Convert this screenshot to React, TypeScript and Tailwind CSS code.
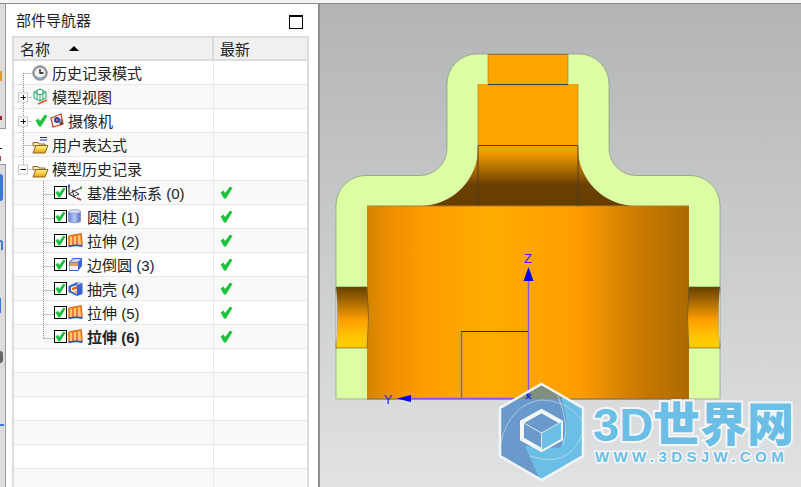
import React from 'react';

const FONT = "font-['Liberation_Sans','Noto_Sans_CJK_SC',sans-serif]";

const Check = ({ className = '' }: { className?: string }) => (
    <svg width="13" height="13" viewBox="0 0 13 13" className={className}>
        <path d="M0.5 6.5 L3.5 4.5 L5 7 L10 0.5 L12.5 2 L6 12.5 L4 12.5 Z" fill="#1fc23c" />
    </svg>
);

const CheckBox = () => (
    <span className="flex h-[13px] w-[13px] shrink-0 items-center justify-center border border-black bg-white">
        <Check className="h-[11px] w-[11px]" />
    </span>
);

const Clock = () => (
    <svg width="16" height="16" viewBox="0 0 16 16">
        <circle cx="8" cy="8" r="7.2" fill="#a4a4a4" stroke="#808080" />
        <circle cx="8" cy="8" r="5.2" fill="#f4f4f0" />
        <path d="M8 4 V8 H11.5" stroke="#111" strokeWidth="1.3" fill="none" />
        <path d="M3.5 11.5 Q8 15 12.5 11.5" stroke="#7fa6cf" strokeWidth="1.6" fill="none" />
    </svg>
);

const ViewCube = () => (
    <svg width="17" height="17" viewBox="0 0 17 17" fill="none">
        <path d="M8 1 L14 4 V10 L8 13 L2 10 V4 Z M2 4 L8 7 L14 4 M8 7 V13 M5 2.5 V11.5 M11 2.5 V11.5" stroke="#1fa868" strokeWidth="1" />
        <path d="M6 16 L15 12" stroke="#e8502a" strokeWidth="1.5" />
    </svg>
);

const Camera = () => (
    <svg width="15" height="15" viewBox="0 0 15 15" fill="none">
        <path d="M1 5 L11 1 L13 11 L3 14 Z" fill="#fff" stroke="#d8341f" strokeWidth="1.2" />
        <circle cx="7" cy="7" r="3" fill="#2b3fa8" />
        <circle cx="7" cy="7" r="1.2" fill="#e86a6a" />
        <path d="M11 6 V12 M9 10 H13" stroke="#222" strokeWidth="1" />
    </svg>
);

const Folder = ({ lines = false }: { lines?: boolean }) => (
    <svg width="17" height="18" viewBox="0 0 17 18" fill="none">
        <defs>
            <linearGradient id="folder" x1="0" x2="0" y1="0" y2="1">
                <stop offset="0" stopColor="#fff09a" />
                <stop offset="1" stopColor="#f0a400" />
            </linearGradient>
        </defs>
        {lines && <path d="M8 1.5 H15 M8 4 H15" stroke="#2a2aa0" strokeWidth="1" />}
        <path d="M1 6.5 H6 L7 8 H13 V10 H1 Z" fill="#fbe7a8" stroke="#7a5c18" strokeWidth="0.9" />
        <path d="M1 17 L4 9.5 H16 L13 17 Z" fill="url(#folder)" stroke="#7a5c18" strokeWidth="0.9" />
    </svg>
);

const Datum = () => (
    <svg width="15" height="17" viewBox="0 0 15 17" fill="none">
        <path d="M1 2 V10 L8 14" stroke="#222" strokeWidth="1.1" />
        <path d="M1 10 L8 6 L14 4 M4 6 L11 10 L6 12 Z" stroke="#444" strokeWidth="1" />
        <path d="M1 0.5 V3" stroke="#2030c0" strokeWidth="1.6" />
        <path d="M9 14 L13 16" stroke="#d02030" strokeWidth="1.6" />
        <path d="M12 4 L14 3" stroke="#20a040" strokeWidth="1.6" />
    </svg>
);

const Cylinder = () => (
    <svg width="13" height="15" viewBox="0 0 13 15">
        <defs>
            <linearGradient id="cyl" x1="0" x2="1" y1="0" y2="0">
                <stop offset="0" stopColor="#5f7fe0" />
                <stop offset="0.5" stopColor="#b8c8f5" />
                <stop offset="1" stopColor="#5470d0" />
            </linearGradient>
        </defs>
        <path d="M0.5 2.5 V12.5 Q6.5 15.5 12.5 12.5 V2.5 Z" fill="url(#cyl)" stroke="#6a7fb0" strokeWidth="0.6" />
        <ellipse cx="6.5" cy="2.5" rx="6" ry="2" fill="#d4dcf4" stroke="#7f90b8" strokeWidth="0.6" />
    </svg>
);

const Extrude = () => (
    <svg width="15" height="15" viewBox="0 0 15 15" fill="none">
        <path d="M1 3 L13 1 L14 12 L1 13 Z" fill="#f9c878" />
        <path d="M1 3 L13 1 L14 12 M1 3 V13 M5 2.5 V13 M9 2 V13" stroke="#e8701c" strokeWidth="1.6" />
        <path d="M0.5 13.5 Q7 11.5 14.5 13" stroke="#2c4fc0" strokeWidth="1.8" />
    </svg>
);

const Blend = () => (
    <svg width="15" height="15" viewBox="0 0 15 15">
        <path d="M1 5 L5 1 H14 V9 L10 14 H1 Z" fill="#3a68d8" />
        <path d="M2 5 L5.5 2 H13 L10 5 Z" fill="#c8d4f0" />
        <rect x="1.5" y="5.5" width="8.5" height="3.5" fill="#f0a040" />
        <rect x="1.5" y="9" width="8.5" height="4" fill="#f4f4f4" />
    </svg>
);

const Shell = () => (
    <svg width="15" height="15" viewBox="0 0 15 15">
        <path d="M0.5 5 L9 1 L14.5 2 V13 L9 15 L0.5 11 Z" fill="#3f63c8" />
        <path d="M9 1 L14.5 2 L9.5 4 Z" fill="#c4cce0" />
        <path d="M9 4 V13 L3 10 V6 Z" fill="#f4f0e8" />
        <path d="M4 7 L9 5 V8 L4 9 Z" fill="#e8641c" />
        <path d="M5 10 L9 10 V12 Z" fill="#f0a020" />
    </svg>
);

// dotted connector and expander box on the left of a tree row
const Gutter = ({ box, last, first }: { box?: '+' | '-'; last?: boolean; first?: boolean }) => (
    <svg width="18" height="24" viewBox="0 0 18 24" className="shrink-0">
        <path d={`M9.5 ${first ? 12 : 0} V${last ? 12 : 24} M9.5 12.5 H18`} stroke="#8a8a8a" strokeDasharray="1 1" />
        {box && (
            <>
                <rect x="4.5" y="8" width="9" height="9" fill="#fff" stroke="#c8c8c8" />
                <path d={box === '+' ? 'M6.5 12.5 H12 M9.5 10 V15' : 'M6.5 12.5 H12'} stroke="#111" />
            </>
        )}
    </svg>
);

const SubGutter = ({ last }: { last?: boolean }) => (
    <svg width="40" height="24" viewBox="0 0 40 24" className="shrink-0">
        <path d={`M29.5 0 V${last ? 13 : 24} M29.5 13.5 H40`} stroke="#8a8a8a" strokeDasharray="1 1" />
    </svg>
);

const rootRows = [
    { label: '历史记录模式', icon: <Clock />, first: true },
    { label: '模型视图', icon: <ViewCube />, box: '+' as const },
    { label: '摄像机', icon: <Camera />, box: '+' as const, check: true },
    { label: '用户表达式', icon: <Folder lines /> },
    { label: '模型历史记录', icon: <Folder />, box: '-' as const, last: true },
];

const featureRows = [
    { label: '基准坐标系 (0)', icon: <Datum /> },
    { label: '圆柱 (1)', icon: <Cylinder /> },
    { label: '拉伸 (2)', icon: <Extrude /> },
    { label: '边倒圆 (3)', icon: <Blend /> },
    { label: '抽壳 (4)', icon: <Shell /> },
    { label: '拉伸 (5)', icon: <Extrude /> },
    { label: '拉伸 (6)', icon: <Extrude />, bold: true, last: true },
];

const Row = ({ index, children, latest }: { index: number; children?: React.ReactNode; latest?: boolean }) => (
    <div className={`flex h-6 shrink-0 border-b border-[#e8e8e8] ${index % 2 ? 'bg-[#f9f9f9]' : 'bg-white'}`}>
        <div className="flex w-[200px] items-center overflow-hidden border-r border-[#e8e8e8]">{children}</div>
        <div className="flex flex-1 items-center pl-[6px]">{latest && <Check />}</div>
    </div>
);

const Navigator = () => (
    <div className="flex h-full w-[312px] shrink-0 flex-col overflow-hidden bg-white pl-[6px] pr-[9px]">
        <div className="flex h-8 shrink-0 items-center justify-between pl-[4px] pr-[6px] pt-[2px]">
            <span className="text-[15px] text-[#222]">部件导航器</span>
            <span className="mt-[1px] h-[14px] w-[14px] border border-t-2 border-black" />
        </div>
        <div className="flex min-h-0 flex-1 flex-col border-2 border-b-0 border-[#dcdcdc]">
            <div className="flex h-[23px] shrink-0 border-b-2 border-[#dcdcdc] bg-[#f0f0f0] text-[15px] text-[#222]">
                <div className="flex w-[200px] items-center border-r-2 border-[#dcdcdc] pl-[6px] pt-[3px]">
                    名称
                    <span className="ml-[19px] -mt-[4px] h-0 w-0 border-x-[5px] border-b-[5px] border-x-transparent border-b-black" />
                </div>
                <div className="flex flex-1 items-center pl-[6px] pt-[3px]">最新</div>
            </div>
            {rootRows.map((r, i) => (
                <Row key={r.label} index={i}>
                    <Gutter box={r.box} first={r.first} last={r.last} />
                    <span className="flex items-center">
                        {r.check && <Check className="mr-[2px] ml-[3px]" />}
                        <span className={`flex shrink-0 items-center ${r.check ? 'w-[18px]' : 'w-[20px]'}`}>{r.icon}</span>
                    </span>
                    <span className="pt-[3px] text-[15px] whitespace-nowrap text-[#222]">{r.label}</span>
                </Row>
            ))}
            {featureRows.map((r, i) => (
                <Row key={r.label} index={i + 5} latest>
                    <SubGutter last={r.last} />
                    <CheckBox />
                    <span className="flex w-[20px] shrink-0 items-center pl-[1px]">{r.icon}</span>
                    <span className={`pt-[3px] text-[15px] whitespace-nowrap text-[#222] ${r.bold ? 'font-bold' : ''}`}>{r.label}</span>
                </Row>
            ))}
            {[12, 13, 14, 15, 16, 17].map((n) => (
                <Row key={n} index={n} />
            ))}
        </div>
    </div>
);

const Model = () => (
    <svg viewBox="320 4 481 483" className="h-full w-full">
        <defs>
            <linearGradient id="body" x1="367" x2="689" y1="0" y2="0" gradientUnits="userSpaceOnUse">
                <stop offset="0" stopColor="#d48400" />
                <stop offset="0.08" stopColor="#f09000" />
                <stop offset="0.17" stopColor="#fc9c00" />
                <stop offset="0.38" stopColor="#ffac00" />
                <stop offset="0.66" stopColor="#ff9c00" />
                <stop offset="0.83" stopColor="#cc7c00" />
                <stop offset="1" stopColor="#ac6a00" />
            </linearGradient>
            <linearGradient id="neck" x1="0" x2="0" y1="146" y2="206" gradientUnits="userSpaceOnUse">
                <stop offset="0" stopColor="#ffa500" />
                <stop offset="0.12" stopColor="#f09a00" />
                <stop offset="0.65" stopColor="#6a4000" />
                <stop offset="1" stopColor="#663e00" />
            </linearGradient>
            <linearGradient id="hole" x1="0" x2="0" y1="287" y2="348" gradientUnits="userSpaceOnUse">
                <stop offset="0" stopColor="#644000" />
                <stop offset="0.3" stopColor="#b87400" />
                <stop offset="0.55" stopColor="#ffa000" />
                <stop offset="0.85" stopColor="#ffc800" />
                <stop offset="1" stopColor="#ffcc00" />
            </linearGradient>
        </defs>
        <path
            d="M336 399 V205 A30 30 0 0 1 366 175.5 H420 A27 27 0 0 0 447 148 V84 A30 30 0 0 1 477 54 H579 A30 30 0 0 1 609 84 V148 A27 27 0 0 0 636 175.5 H690 A30 30 0 0 1 720 205 V399 Z"
            fill="#dcffa3"
            stroke="#8f9f80"
            strokeWidth="0.8"
        />
        <path d="M420 206 A58 58 0 0 0 478 148 V145 H578 V148 A58 58 0 0 0 636 206 Z" fill="url(#neck)" />
        <rect x="367" y="206" width="322" height="193" fill="url(#body)" />
        <path d="M367 206 H689" stroke="#b87820" />
        <rect x="488" y="54" width="80" height="30" fill="#ffa500" />
        <rect x="478" y="84" width="100" height="61" fill="#ffa500" />
        <path d="M488 54.5 H568" stroke="#9a7030" />
        <path d="M488 54 V84 M568 54 V84 M478 84 V145 M578 84 V145" stroke="#b88020" strokeWidth="0.7" />
        <path d="M488 84.5 H568 M478 145.5 H578" stroke="#3a3a3a" />
        <path d="M478 146 V206 M578 146 V206" stroke="#4a3a2a" />
        <path d="M336 287 H367 Q370 317 367 348 H336 Q339 317 336 287 Z" fill="url(#hole)" stroke="#5a5040" strokeWidth="0.6" />
        <path d="M720 287 H689 Q686 317 689 348 H720 Q717 317 720 287 Z" fill="url(#hole)" stroke="#5a5040" strokeWidth="0.6" />
        <path d="M336 287 Q339 317 336 348 Z" fill="#cfd0d3" />
        <path d="M720 287 Q717 317 720 348 Z" fill="#cfd1d3" />
        <path d="M367 399 H689" stroke="#7a6a50" strokeWidth="1.2" />
        <path d="M336 399 H367 M689 399 H720" stroke="#c4ccb0" strokeWidth="1.5" />
        <path d="M528.5 280 V399 M410 398.5 H528 M461.5 331 V399" stroke="#7a5cf5" strokeWidth="1.4" />
        <path d="M461 331.5 H528" stroke="#1010c8" strokeWidth="1.2" />
        <path d="M528.5 267 L523.5 281 H533.5 Z M397 398.5 L411 395 V402 Z" fill="#0000f0" />
        <text x="528" y="263" textAnchor="middle" fontSize="13" fill="#2a2af0" fontFamily="Liberation Sans">Z</text>
        <text x="388" y="404" textAnchor="middle" fontSize="13" fill="#2a2af0" fontFamily="Liberation Sans">Y</text>
    </svg>
);

const Logo = () => (
    <svg width="90" height="102" viewBox="497 381 90 102" className="shrink-0">
        <defs>
            <clipPath id="hex">
                <path d="M541.5 384 L583 408 V456 L541.5 480 L500 456 V408 Z" />
            </clipPath>
        </defs>
        <g clipPath="url(#hex)">
            <rect x="497" y="381" width="90" height="102" fill="#6a9acb" />
            <path d="M560 395 Q572 425 560 448 L525 446 L541 482 L590 470 V395 Z" fill="#6bbfe6" />
            <rect x="497" y="381" width="65" height="18" fill="#7f9080" />
            <path d="M501 442 Q510 405 540 400 Q570 400 585 425" fill="none" stroke="#c4d8ea" strokeWidth="0.7" />
            <path d="M584 430 Q570 470 530 456 M558 396 Q570 425 563 445" fill="none" stroke="#c4e4f2" strokeWidth="0.7" />
            <path d="M526 394 L531 399 M531 394 L526 399 M528 392 V398" stroke="#1a2ae0" strokeWidth="1.3" />
        </g>
        <path d="M541.5 384 L583 408 V456 L541.5 480 L500 456 V408 Z" fill="none" stroke="#f4f6f6" strokeWidth="2.5" />
        <path d="M541.5 411 L561 422 V439 L541.5 450 L522 439 V422 Z" fill="#6a9acb" stroke="#f4f6f6" strokeWidth="4" />
        <path d="M541.5 433 L561 422 V439 L541.5 450 Z" fill="#6bbfe6" />
        <path d="M522 422 L541.5 433 L561 422 M541.5 433 V450" fill="none" stroke="#dce8f0" strokeWidth="1" />
    </svg>
);

const Viewport = () => (
    <div className="relative min-w-0 flex-1 border-l-2 border-[#8a9094] bg-gradient-to-b from-[#b3b4b6] to-[#e1e2e4]">
        <Model />
        <div className="absolute top-[377px] left-[177px] flex items-start">
            <Logo />
            <div className="ml-[6px] flex flex-col items-start font-['Liberation_Sans','Noto_Sans_CJK_SC',sans-serif]">
                <span className="mt-[20px] text-[47px] leading-[48px] font-black whitespace-nowrap text-[#6bbfe6] [-webkit-text-stroke:4px_#f4f6f8] [paint-order:stroke_fill]">
                    3D世界网
                </span>
                <span className="ml-[2px] text-[15px] leading-[16px] font-bold tracking-[4.4px] whitespace-nowrap text-[#6bbfe6] [-webkit-text-stroke:3px_#f4f6f8] [paint-order:stroke_fill]">
                    WWW.3DSJW.COM
                </span>
            </div>
        </div>
    </div>
);

const SideStrip = () => (
    <div className="flex h-full w-[6px] shrink-0 flex-col bg-white">
        <div className="relative h-[125px] border-r border-b border-[#9a9a9a] bg-[#dcdcdc]">
            <span className="absolute top-[67px] left-0 h-[10px] w-[2px] bg-[#d9a020]" />
            <span className="absolute top-[112px] left-0 h-[4px] w-[2px] bg-[#a02020]" />
        </div>
        <div className="relative h-[35px]">
            <span className="absolute top-[19px] left-0 h-[1px] w-[2px] bg-black" />
            <span className="absolute top-[27px] left-0 h-[5px] w-[1px] bg-[#a04080]" />
        </div>
        <div className="relative flex-1 border-t border-r border-[#9a9a9a] bg-[#dcdcdc]">
            <span className="absolute top-[9px] left-0 h-[27px] w-[3px] rounded-r bg-[#3a78e0]" />
            <span className="absolute top-[75px] left-0 h-[10px] w-[3px] rounded-tr-full border-t-2 border-r-2 border-[#3a78e0]" />
            <span className="absolute top-[133px] left-0 h-[15px] w-[1px] bg-[#3a78e0]" />
            <span className="absolute top-[186px] left-0 h-[12px] w-[3px] rounded-r-full bg-[#666]" />
            <span className="absolute top-[259px] left-0 h-[2px] w-[4px] bg-[#3a78e0]" />
        </div>
    </div>
);

export default function App() {
    return (
        <div className={`flex h-[487px] w-[801px] flex-col overflow-hidden bg-white ${FONT}`}>
            <div className="h-[4px] shrink-0 border-b border-[#8a8a8a] bg-[#f4f4f4]" />
            <div className="flex min-h-0 flex-1">
                <SideStrip />
                <Navigator />
                <Viewport />
            </div>
        </div>
    );
}
